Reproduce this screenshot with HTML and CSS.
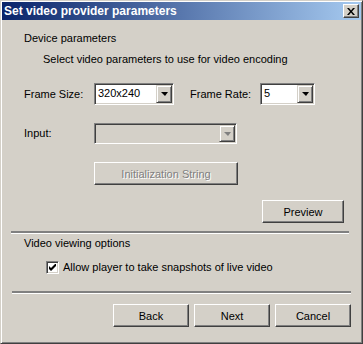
FILE: index.html
```html
<!DOCTYPE html>
<html lang="en">
<head>
  <meta charset="UTF-8">
  <title>Set video provider parameters</title>
  <link rel="stylesheet" href="styles.css">
</head>
<body>

  <div class="window">
    <!-- Title bar -->
    <div class="titlebar">
      <span class="title">Set video provider parameters</span>
      <button class="close-btn" aria-label="Close">
        <svg width="8" height="7" viewBox="0 0 8 7">
          <path d="M0 0h2l2 2.5L6 0h2L5 3.5 8 7H6L4 4.5 2 7H0l3-3.5z" fill="#000"/>
        </svg>
      </button>
    </div>

    <div class="client">
      <div class="group-title">Device parameters</div>
      <div class="hint">Select video parameters to use for video encoding</div>

      <div class="field-row">
        <span class="field-label">Frame Size:</span>
        <div class="combo combo-size">
          <span class="combo-value">320x240</span>
          <span class="combo-arrow"><i class="tri"></i></span>
        </div>
        <span class="field-label rate-label">Frame Rate:</span>
        <div class="combo combo-rate">
          <span class="combo-value">5</span>
          <span class="combo-arrow"><i class="tri"></i></span>
        </div>
      </div>

      <div class="field-row input-row">
        <span class="field-label">Input:</span>
        <div class="combo combo-input disabled">
          <span class="combo-value"></span>
          <span class="combo-arrow"><i class="tri"></i></span>
        </div>
      </div>

      <div class="init-row">
        <button class="btn btn-init" disabled>Initialization String</button>
      </div>

      <div class="preview-row">
        <button class="btn btn-preview">Preview</button>
      </div>

      <div class="separator"></div>

      <div class="group-title group-title-video">Video viewing options</div>
      <div class="check-row">
        <span class="checkbox">
          <svg width="7" height="7" viewBox="0 0 7 7">
            <path d="M0 2v3l2 2 5-5V-1L2 4z" fill="#000"/>
          </svg>
        </span>
        <span>Allow player to take snapshots of live video</span>
      </div>

      <div class="separator separator-bottom"></div>

      <div class="button-row">
        <button class="btn btn-nav">Back</button>
        <button class="btn btn-nav">Next</button>
        <button class="btn btn-nav">Cancel</button>
      </div>
    </div>
  </div>

</body>
</html>
```

FILE: styles.css
```css
body {
  margin: 0;
  font-family: 'Liberation Sans', Arial, sans-serif;
  font-size: 11px;
  color: #000;
  background-color: #d4d0c8;
}

/* Window frame */
.window {
  width: 363px;
  height: 344px;
  box-sizing: border-box;
  padding: 1px;
  background-color: #d4d0c8;
  border: 1px solid;
  border-color: #d4d0c8 #404040 #404040 #d4d0c8;
  box-shadow: inset 1px 1px #fff, inset -1px -1px #808080;
  overflow: hidden;
}

/* Title bar */
.titlebar {
  height: 18px;
  display: flex;
  align-items: center;
  justify-content: space-between;
  padding: 0 2px;
  background: linear-gradient(to right, #0a246a, #a6caf0);
}

.title {
  color: #fff;
  font-weight: bold;
  font-size: 12px;
}

.close-btn {
  width: 16px;
  height: 14px;
  padding: 0;
  display: flex;
  align-items: center;
  justify-content: center;
  background-color: #d4d0c8;
  border: 1px solid;
  border-color: #fff #404040 #404040 #fff;
  box-shadow: inset -1px -1px #808080;
}

/* Client area */
.client {
  display: flex;
  flex-direction: column;
  line-height: 13px;
}

.group-title {
  margin: 12px 0 0 22px;
}

.group-title-video {
  margin-top: 3px;
}

.hint {
  margin: 8px 0 0 41px;
}

.field-row {
  display: flex;
  align-items: center;
  height: 22px;
  margin: 17px 0 0 22px;
}

.field-label {
  width: 70px;
}

.rate-label {
  margin-left: 16px;
}

.input-row {
  height: 21px;
  margin-top: 18px;
}

/* Combo boxes */
.combo {
  display: flex;
  height: 100%;
  box-sizing: border-box;
  padding: 1px;
  background-color: #fff;
  border: 1px solid;
  border-color: #808080 #fff #fff #808080;
  box-shadow: inset 1px 1px #404040, inset -1px -1px #d4d0c8;
}

.combo-size {
  width: 80px;
}

.combo-rate {
  width: 55px;
}

.combo-input {
  width: 143px;
}

.combo.disabled {
  background-color: #d4d0c8;
}

.combo-value {
  flex: 1;
  padding-left: 2px;
  font-size: 11px;
  line-height: 16px;
}

.combo-arrow {
  width: 16px;
  box-sizing: border-box;
  display: flex;
  align-items: center;
  justify-content: center;
  background-color: #d4d0c8;
  border: 1px solid;
  border-color: #d4d0c8 #404040 #404040 #d4d0c8;
  box-shadow: inset 1px 1px #fff, inset -1px -1px #808080;
}

.tri {
  width: 0;
  height: 0;
  border-left: 4px solid transparent;
  border-right: 3px solid transparent;
  border-top: 4px solid #000;
}

.disabled .tri {
  border-top-color: #808080;
}

/* Buttons */
.btn {
  font-family: inherit;
  font-size: 11px;
  color: #000;
  height: 23px;
  padding: 0;
  background-color: #d4d0c8;
  border: 1px solid;
  border-color: #fff #404040 #404040 #fff;
  box-shadow: inset -1px -1px #808080, inset 1px 1px #d4d0c8;
}

.btn:disabled {
  color: #808080;
  text-shadow: 1px 1px #fff;
}

.init-row {
  margin: 18px 0 0 92px;
}

.btn-init {
  width: 144px;
}

.preview-row {
  display: flex;
  justify-content: flex-end;
  margin: 15px 17px 0 0;
}

.btn-preview {
  width: 82px;
}

.separator {
  height: 0;
  margin: 8px 12px 0 9px;
  border-top: 2px solid #808080;
  border-bottom: 1px solid #fff;
}

.separator-bottom {
  margin: 17px 10px 0 10px;
}

/* Checkbox row */
.check-row {
  display: flex;
  align-items: center;
  gap: 4px;
  margin: 11px 0 0 44px;
}

.checkbox {
  width: 13px;
  height: 13px;
  box-sizing: border-box;
  display: flex;
  align-items: center;
  justify-content: center;
  background-color: #fff;
  border: 1px solid;
  border-color: #808080 #fff #fff #808080;
  box-shadow: inset 1px 1px #404040, inset -1px -1px #d4d0c8;
}

/* Bottom buttons */
.button-row {
  display: flex;
  justify-content: flex-end;
  gap: 5px;
  margin: 10px 10px 0 0;
}

.btn-nav {
  width: 76px;
}
```
